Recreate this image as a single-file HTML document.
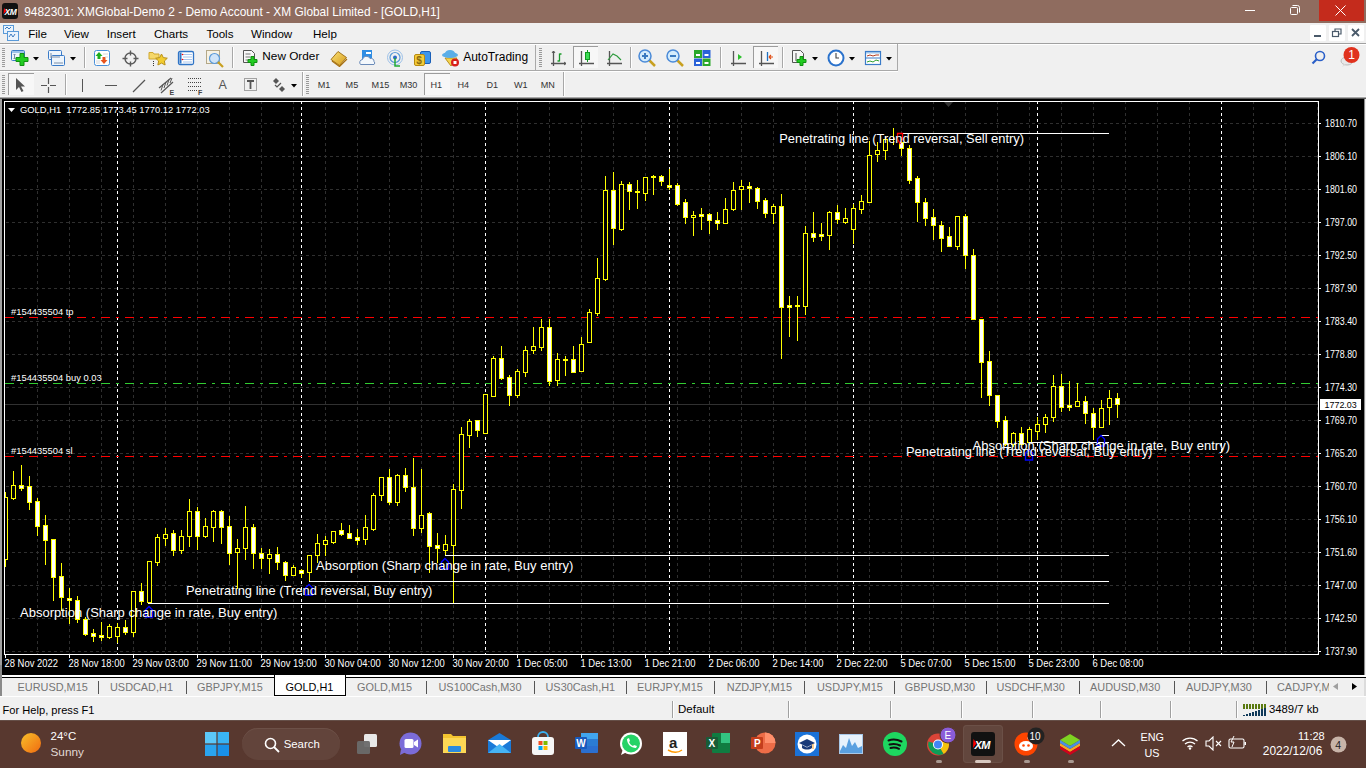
<!DOCTYPE html>
<html><head><meta charset="utf-8"><title>MT4</title>
<style>
html,body{margin:0;padding:0;}
body{width:1366px;height:768px;overflow:hidden;position:relative;background:#f0f0f0;font-family:"Liberation Sans", sans-serif;}
.a{position:absolute;}
.t{white-space:nowrap;line-height:1;}
#title{left:0;top:0;width:1366px;height:23px;background:#8f6c5f;}
#menu{left:0;top:23px;width:1366px;height:20px;background:#f0f0f0;}
#chartwin{left:0;top:97px;width:1366px;height:578px;background:#a0a0a0;}
#taskbar{left:0;top:720px;width:1366px;height:48px;background:#58382f;}
</style></head><body>
<div id="title" class="a">
  <div class="a" style="left:2px;top:3px;width:16px;height:16px;background:#111;border-radius:3px;"></div>
  <div class="a t" style="left:4.5px;top:7.5px;font-size:8.5px;font-weight:bold;font-style:italic;color:#fff;letter-spacing:-0.5px">XM</div><svg class="a" style="left:3px;top:8px" width="4" height="6" viewBox="0 0 4 6"><path d="M1 0L3.5 3L0.5 6Z" fill="#f00"/></svg>
  <div class="a t" style="left:24.2px;top:7.2px;font-size:11.9px;color:#fff;">9482301: XMGlobal-Demo 2 - Demo Account - XM Global Limited - [GOLD,H1]</div>
  <div class="a" style="left:1245px;top:10px;width:10px;height:1px;background:#fff"></div>
  <svg class="a" style="left:1289px;top:4px" width="12" height="12" viewBox="0 0 12 12"><rect x="1.5" y="3.5" width="7" height="7" rx="1" fill="none" stroke="#fff"/><path d="M3.5 1.5h5a2 2 0 0 1 2 2v5" fill="none" stroke="#fff"/></svg>
  <div class="a" style="left:1319px;top:0;width:45px;height:21px;background:#c42b1c"></div>
  <svg class="a" style="left:1335px;top:5px" width="11" height="11" viewBox="0 0 11 11"><path d="M0.5 0.5l10 10M10.5 0.5l-10 10" stroke="#fff" stroke-width="1"/></svg>
</div>
<div id="menu" class="a"></div>
<div class="a" style="left:0;top:43px;width:1366px;height:1px;background:#a0a0a0"></div><div class="a" style="left:0;top:44px;width:1366px;height:1px;background:#fff"></div>
<svg class="a" style="left:3px;top:25px;" width="16" height="16" viewBox="0 0 16 16"><rect x="0.5" y="0.5" width="10" height="8" fill="#eaf3fc" stroke="#5a9ad8"/><rect x="4.5" y="6.5" width="11" height="9" fill="#eaf3fc" stroke="#5a9ad8"/><path d="M2 4l2-2 2 2 2-2M6 12l2-3 2 3 2-3" stroke="#3a7ac0" fill="none"/></svg><div class="a t" style="left:28.2px;top:27.78px;font-size:11.6px;color:#000;">File</div><div class="a t" style="left:64px;top:27.78px;font-size:11.6px;color:#000;">View</div><div class="a t" style="left:106.7px;top:27.78px;font-size:11.6px;color:#000;">Insert</div><div class="a t" style="left:154px;top:27.78px;font-size:11.6px;color:#000;">Charts</div><div class="a t" style="left:206.4px;top:27.78px;font-size:11.6px;color:#000;">Tools</div><div class="a t" style="left:251px;top:27.78px;font-size:11.6px;color:#000;">Window</div><div class="a t" style="left:313px;top:27.78px;font-size:11.6px;color:#000;">Help</div><div class="a" style="left:1310px;top:25px;width:16px;height:16px;background:#fff;border-radius:1px;"></div><svg class="a" style="left:1310px;top:25px;" width="16" height="16" viewBox="0 0 16 16"><rect x="4" y="10" width="7" height="2" fill="#4a5a6a"/></svg><div class="a" style="left:1329px;top:25px;width:16px;height:16px;background:#fff;border-radius:1px;"></div><svg class="a" style="left:1329px;top:25px;" width="16" height="16" viewBox="0 0 16 16"><rect x="3.5" y="6.5" width="6" height="5" fill="none" stroke="#4a5a6a" stroke-width="1.2"/><path d="M6 6V4h6v5h-2" fill="none" stroke="#4a5a6a" stroke-width="1.2"/></svg><div class="a" style="left:1348px;top:25px;width:16px;height:16px;background:#fff;border-radius:1px;"></div><svg class="a" style="left:1348px;top:25px;" width="16" height="16" viewBox="0 0 16 16"><path d="M4 4l7 7M11 4l-7 7" stroke="#4a5a6a" stroke-width="1.8"/></svg>
<div class="a" style="left:0;top:44px;width:898px;height:1px;background:#fff"></div><div class="a" style="left:0;top:70px;width:898px;height:1px;background:#a9a9a9"></div><div class="a" style="left:0;top:71px;width:898px;height:1px;background:#fff"></div><div class="a" style="left:897px;top:44px;width:1px;height:27px;background:#a9a9a9"></div><div class="a" style="left:535px;top:45px;width:1px;height:25px;background:#a9a9a9"></div><div class="a" style="left:565px;top:72px;width:801px;height:0px;"></div><svg class="a" style="left:2px;top:48px;" width="3" height="20" viewBox="0 0 3 20"><rect x="0" y="0" width="3" height="1" fill="#9a9a9a"/><rect x="0" y="2" width="3" height="1" fill="#9a9a9a"/><rect x="0" y="4" width="3" height="1" fill="#9a9a9a"/><rect x="0" y="6" width="3" height="1" fill="#9a9a9a"/><rect x="0" y="8" width="3" height="1" fill="#9a9a9a"/><rect x="0" y="10" width="3" height="1" fill="#9a9a9a"/><rect x="0" y="12" width="3" height="1" fill="#9a9a9a"/><rect x="0" y="14" width="3" height="1" fill="#9a9a9a"/><rect x="0" y="16" width="3" height="1" fill="#9a9a9a"/><rect x="0" y="18" width="3" height="1" fill="#9a9a9a"/></svg><svg class="a" style="left:539px;top:48px;" width="3" height="20" viewBox="0 0 3 20"><rect x="0" y="0" width="3" height="1" fill="#9a9a9a"/><rect x="0" y="2" width="3" height="1" fill="#9a9a9a"/><rect x="0" y="4" width="3" height="1" fill="#9a9a9a"/><rect x="0" y="6" width="3" height="1" fill="#9a9a9a"/><rect x="0" y="8" width="3" height="1" fill="#9a9a9a"/><rect x="0" y="10" width="3" height="1" fill="#9a9a9a"/><rect x="0" y="12" width="3" height="1" fill="#9a9a9a"/><rect x="0" y="14" width="3" height="1" fill="#9a9a9a"/><rect x="0" y="16" width="3" height="1" fill="#9a9a9a"/><rect x="0" y="18" width="3" height="1" fill="#9a9a9a"/></svg><svg class="a" style="left:2px;top:75px;" width="3" height="20" viewBox="0 0 3 20"><rect x="0" y="0" width="3" height="1" fill="#9a9a9a"/><rect x="0" y="2" width="3" height="1" fill="#9a9a9a"/><rect x="0" y="4" width="3" height="1" fill="#9a9a9a"/><rect x="0" y="6" width="3" height="1" fill="#9a9a9a"/><rect x="0" y="8" width="3" height="1" fill="#9a9a9a"/><rect x="0" y="10" width="3" height="1" fill="#9a9a9a"/><rect x="0" y="12" width="3" height="1" fill="#9a9a9a"/><rect x="0" y="14" width="3" height="1" fill="#9a9a9a"/><rect x="0" y="16" width="3" height="1" fill="#9a9a9a"/><rect x="0" y="18" width="3" height="1" fill="#9a9a9a"/></svg><svg class="a" style="left:306px;top:75px;" width="3" height="20" viewBox="0 0 3 20"><rect x="0" y="0" width="3" height="1" fill="#9a9a9a"/><rect x="0" y="2" width="3" height="1" fill="#9a9a9a"/><rect x="0" y="4" width="3" height="1" fill="#9a9a9a"/><rect x="0" y="6" width="3" height="1" fill="#9a9a9a"/><rect x="0" y="8" width="3" height="1" fill="#9a9a9a"/><rect x="0" y="10" width="3" height="1" fill="#9a9a9a"/><rect x="0" y="12" width="3" height="1" fill="#9a9a9a"/><rect x="0" y="14" width="3" height="1" fill="#9a9a9a"/><rect x="0" y="16" width="3" height="1" fill="#9a9a9a"/><rect x="0" y="18" width="3" height="1" fill="#9a9a9a"/></svg><svg class="a" style="left:10px;top:49px;" width="20" height="18" viewBox="0 0 20 18"><rect x="1.5" y="1.5" width="13" height="10" rx="1" fill="#eef5fc" stroke="#3a7bc8"/><rect x="2" y="2" width="12" height="2" fill="#9cc3ea"/><path d="M4.5 5v5M3.5 6l1-1 1 1M3.5 9l1 1 1-1" stroke="#7a8ea8" fill="none"/><path d="M10 4.5h4v4h4v4h-4v4h-4v-4h-4v-4h4z" fill="#22cc22" stroke="#109010"/></svg><svg class="a" style="left:33px;top:57px;" width="6" height="4" viewBox="0 0 6 4"><path d="M0 0H6L3 3.5Z" fill="#000"/></svg><svg class="a" style="left:47px;top:49px;" width="20" height="18" viewBox="0 0 20 18"><rect x="1.5" y="1.5" width="13" height="9" rx="1" fill="#eef5fc" stroke="#3a7bc8"/><rect x="4.5" y="6.5" width="13" height="10" rx="1" fill="#eef5fc" stroke="#3a7bc8"/><path d="M4 4v5M4 8h9M7 14h9" stroke="#7a8ea8" fill="none"/></svg><svg class="a" style="left:70px;top:57px;" width="6" height="4" viewBox="0 0 6 4"><path d="M0 0H6L3 3.5Z" fill="#000"/></svg><div class="a" style="left:84px;top:47px;width:1px;height:21px;background:#a8a8a8;box-shadow:1px 0 0 #fff;"></div><svg class="a" style="left:93px;top:49px;" width="18" height="18" viewBox="0 0 18 18"><rect x="1.5" y="1.5" width="15" height="15" rx="2" fill="#fff" stroke="#4a90d9"/><path d="M6 3L2.5 7H4.5V10H7.5V7H9.5Z" fill="#1fae1f"/><path d="M11 15L14.5 11H12.5V8H9.5V11H7.5Z" fill="#e8541e"/><path d="M10 5h5M12 8h3M3 12h4M3 14h4" stroke="#d8d8d8"/></svg><svg class="a" style="left:122px;top:50px;" width="17" height="17" viewBox="0 0 17 17"><circle cx="8.5" cy="8.5" r="5.5" fill="none" stroke="#5a5a5a" stroke-width="1.4"/><path d="M8.5 0.5v5M8.5 11.5v5M0.5 8.5h5M11.5 8.5h5" stroke="#5a5a5a" stroke-width="1.4"/></svg><svg class="a" style="left:148px;top:49px;" width="20" height="18" viewBox="0 0 20 18"><path d="M1 3.5h4l1 1.5h5v5H1z" fill="#f6d86a" stroke="#d0a830"/><path d="M13.5 5l1.8 3.6 4 .6-2.9 2.8.7 4-3.6-1.9-3.6 1.9.7-4-2.9-2.8 4-.6z" fill="#f2cc30" stroke="#b8901a"/><path d="M5.5 12v5" stroke="#333" stroke-dasharray="1 1"/></svg><svg class="a" style="left:177px;top:50px;" width="18" height="16" viewBox="0 0 18 16"><rect x="1.5" y="1.5" width="15" height="13" rx="1.5" fill="#fff" stroke="#2f74c6" stroke-width="1.3"/><rect x="2.5" y="2.5" width="2" height="11" fill="#2f74c6"/><path d="M6 4.5h9M6 7h9M6 9.5h9M6 12h9" stroke="#a9c6ee"/><circle cx="5.5" cy="4.5" r=".8" fill="red"/><circle cx="5.5" cy="9.5" r=".8" fill="red"/></svg><svg class="a" style="left:205px;top:49px;" width="20" height="19" viewBox="0 0 20 19"><rect x="1.5" y="1.5" width="13" height="13" fill="#f7f2e4" stroke="#b4a888"/><circle cx="9.5" cy="9.5" r="5" fill="#cfe4f8" stroke="#5b9ad8" stroke-width="1.2"/><path d="M13 13l5 5" stroke="#c8a020" stroke-width="2.2"/></svg><div class="a" style="left:232px;top:47px;width:1px;height:21px;background:#a8a8a8;box-shadow:1px 0 0 #fff;"></div><svg class="a" style="left:242px;top:49px;" width="18" height="19" viewBox="0 0 18 19"><path d="M1.5 1.5h8l3 3v9h-11z" fill="#f8f8f8" stroke="#555"/><path d="M3.5 5h5M3.5 8h5M3.5 11h5" stroke="#777"/><path d="M9 7.5h3v3h3v3h-3v3h-3v-3h-3v-3h3z" fill="#22cc22" stroke="#109010"/></svg><div class="a t" style="left:262.3px;top:51.01px;font-size:11.8px;color:#000;">New Order</div><svg class="a" style="left:330px;top:50px;" width="18" height="17" viewBox="0 0 18 17"><defs><linearGradient id="gld" x1="0" y1="0" x2="1" y2="1"><stop offset="0" stop-color="#fbe27a"/><stop offset="1" stop-color="#d49a18"/></linearGradient></defs><path d="M1 9.5L8 1.5L16.5 7.5L9.5 15.5Z" fill="url(#gld)" stroke="#9a6a10" stroke-width=".9"/><path d="M2 11l7.5 5.5 7.5-7.5" stroke="#a87010" stroke-width="1.2" fill="none"/></svg><svg class="a" style="left:358px;top:49px;" width="18" height="18" viewBox="0 0 18 18"><rect x="4" y="1" width="10" height="10" fill="#2f8de4"/><rect x="8" y="3" width="5" height="2" fill="#fff"/><path d="M2.5 15.5a3 3 0 0 1 2-5a4 4 0 0 1 7.5-1a3 3 0 0 1 4 3a2 2 0 0 1 0 3z" fill="#f4f8fc" stroke="#6a8ab8"/></svg><svg class="a" style="left:386px;top:49px;" width="18" height="18" viewBox="0 0 18 18"><circle cx="9" cy="8.5" r="7.5" fill="none" stroke="#9cc0e8" stroke-width="1"/><circle cx="9" cy="8.5" r="5" fill="none" stroke="#5a9ad8" stroke-width="1.2"/><circle cx="9" cy="8.5" r="2" fill="#2a6ac8"/><path d="M9 9v8h5" stroke="#22aa33" stroke-width="1.5" fill="none"/></svg><svg class="a" style="left:413px;top:49px;" width="19" height="18" viewBox="0 0 19 18"><rect x="7.5" y="2.5" width="10" height="12" rx="1.5" fill="#3d96ea" stroke="#1a5fb8"/><rect x="1.5" y="5.5" width="10" height="11" rx="1.5" fill="#f2cc3a" stroke="#b88a10"/><text x="3.3" y="14.5" font-family="Liberation Sans" font-size="10" font-weight="bold" fill="#8a6a10">$</text></svg><svg class="a" style="left:441px;top:49px;" width="19" height="18" viewBox="0 0 19 18"><path d="M4 9l6 8 6-8z" fill="#f4d450" stroke="#b89020"/><ellipse cx="9" cy="6" rx="8" ry="3" fill="#5aaee8"/><ellipse cx="9" cy="4.5" rx="5" ry="3.5" fill="#5aaee8"/><circle cx="14" cy="13.5" r="4" fill="#d8201a"/><rect x="12.5" y="12" width="3" height="3" fill="#fff"/></svg><div class="a t" style="left:463.2px;top:50.84px;font-size:12px;color:#000;">AutoTrading</div><svg class="a" style="left:550px;top:50px;" width="17" height="17" viewBox="0 0 17 17"><path d="M3.5 1v15M1 13.5h15" stroke="#555" stroke-width="1.3"/><path d="M2 3l1.5-2 1.5 2M14 12l2 1.5-2 1.5" stroke="#555" fill="none"/><path d="M9.5 11.5v-8M7.5 11h2M9.5 4h2" stroke="#1a9a2a" stroke-width="1.3"/></svg><div class="a" style="left:573px;top:46px;width:25px;height:22px;background:#f7f7f7;border-left:1px solid #9c9c9c;border-top:1px solid #9c9c9c;box-sizing:border-box;"></div><svg class="a" style="left:578px;top:50px;" width="17" height="17" viewBox="0 0 17 17"><path d="M3.5 1v15M1 13.5h15" stroke="#555" stroke-width="1.3"/><path d="M9.5 0v12" stroke="#109a20"/><rect x="7.5" y="2.5" width="4" height="7" fill="#3ddc55" stroke="#109a20"/></svg><svg class="a" style="left:606px;top:50px;" width="17" height="17" viewBox="0 0 17 17"><path d="M3.5 1v15M1 13.5h15" stroke="#555" stroke-width="1.3"/><path d="M2 10l5-6 4 2 4 4" stroke="#2a9a3a" fill="none" stroke-width="1.1"/></svg><div class="a" style="left:630px;top:47px;width:1px;height:21px;background:#a8a8a8;box-shadow:1px 0 0 #fff;"></div><svg class="a" style="left:637px;top:48px;" width="20" height="20" viewBox="0 0 20 20"><path d="M11 11l7 7" stroke="#c8a020" stroke-width="2.5"/><circle cx="8" cy="8" r="6" fill="#d4ecfc" stroke="#4a8ad8" stroke-width="1.5"/><path d="M5 8h6M8 5v6" stroke="#3a7ac0" stroke-width="2"/></svg><svg class="a" style="left:665px;top:48px;" width="20" height="20" viewBox="0 0 20 20"><path d="M11 11l7 7" stroke="#c8a020" stroke-width="2.5"/><circle cx="8" cy="8" r="6" fill="#d4ecfc" stroke="#4a8ad8" stroke-width="1.5"/><path d="M5 8h6" stroke="#3a7ac0" stroke-width="2"/></svg><svg class="a" style="left:694px;top:50px;" width="17" height="16" viewBox="0 0 17 16"><rect x="0" y="0" width="8" height="8" fill="#2aa82a"/><rect x="8.5" y="0" width="8" height="8" fill="#2a62d8"/><rect x="0" y="8.5" width="8" height="8" fill="#2a62d8"/><rect x="8.5" y="8.5" width="8" height="8" fill="#2aa82a"/><path d="M2 4h4v2h-4zM10.5 4h4v2h-4zM2 12h4v2h-4zM10.5 12h4v2h-4z" fill="#fff"/></svg><div class="a" style="left:720px;top:47px;width:1px;height:21px;background:#a8a8a8;box-shadow:1px 0 0 #fff;"></div><svg class="a" style="left:730px;top:50px;" width="17" height="17" viewBox="0 0 17 17"><path d="M3.5 1v15M1 13.5h15" stroke="#555" stroke-width="1.3"/><path d="M8 4l4 3-4 3z" fill="#2cc02c"/></svg><div class="a" style="left:753px;top:46px;width:25px;height:22px;background:#f7f7f7;border-left:1px solid #9c9c9c;border-top:1px solid #9c9c9c;box-sizing:border-box;"></div><svg class="a" style="left:758px;top:50px;" width="17" height="17" viewBox="0 0 17 17"><path d="M3.5 1v15M1 13.5h15" stroke="#555" stroke-width="1.3"/><path d="M9.5 2v9" stroke="#2070c0" stroke-width="1.3"/><path d="M11 7h4M11 7l2-2M11 7l2 2" stroke="#e04a10" stroke-width="1.2"/></svg><div class="a" style="left:782px;top:47px;width:1px;height:21px;background:#a8a8a8;box-shadow:1px 0 0 #fff;"></div><svg class="a" style="left:791px;top:49px;" width="18" height="19" viewBox="0 0 18 19"><path d="M1.5 1.5h8l3 3v9h-11z" fill="#f8f8f8" stroke="#555"/><path d="M5 4v8" stroke="#555"/><path d="M9 7.5h3v3h3v3h-3v3h-3v-3h-3v-3h3z" fill="#22cc22" stroke="#109010"/></svg><svg class="a" style="left:812px;top:57px;" width="6" height="4" viewBox="0 0 6 4"><path d="M0 0H6L3 3.5Z" fill="#000"/></svg><svg class="a" style="left:827px;top:49px;" width="18" height="18" viewBox="0 0 18 18"><circle cx="9" cy="9" r="7.5" fill="#fff" stroke="#2a72cc" stroke-width="2"/><path d="M9 4v5h3" stroke="#444" fill="none" stroke-width="1.1"/></svg><svg class="a" style="left:849px;top:57px;" width="6" height="4" viewBox="0 0 6 4"><path d="M0 0H6L3 3.5Z" fill="#000"/></svg><svg class="a" style="left:864px;top:50px;" width="18" height="16" viewBox="0 0 18 16"><rect x="1.5" y="1.5" width="15" height="13" fill="#fff" stroke="#3a7bc8" stroke-width="1.2"/><rect x="2" y="2" width="14" height="1.5" fill="#9cc3ea"/><path d="M2 8h14" stroke="#3a7bc8"/><path d="M3 6l3-1 3 1 3-1 3 0" stroke="#b03a20" fill="none"/><path d="M3 12l3-1 3 1 3-2 3 1" stroke="#30a030" fill="none"/></svg><svg class="a" style="left:886px;top:57px;" width="6" height="4" viewBox="0 0 6 4"><path d="M0 0H6L3 3.5Z" fill="#000"/></svg><svg class="a" style="left:1311px;top:50px;" width="15" height="15" viewBox="0 0 15 15"><circle cx="9" cy="6" r="4.5" fill="none" stroke="#2a5fc8" stroke-width="1.6"/><path d="M6 9l-4.5 4.5" stroke="#2a5fc8" stroke-width="2.2"/></svg><svg class="a" style="left:1336px;top:46px;" width="30" height="22" viewBox="0 0 30 22"><ellipse cx="11" cy="15" rx="6" ry="4" fill="#e8e8e8" stroke="#bbb"/><path d="M8 18l-2 3 4-2" fill="#ddd"/><circle cx="15.5" cy="9" r="8" fill="#e0321e"/><text x="12.3" y="13.3" font-family="Liberation Sans" font-size="12" fill="#fff">1</text></svg><div class="a" style="left:8px;top:73px;width:26px;height:22px;background:#f7f7f7;border-left:1px solid #9c9c9c;border-top:1px solid #9c9c9c;box-sizing:border-box;"></div><svg class="a" style="left:15px;top:77px;" width="10" height="16" viewBox="0 0 10 16"><path d="M1 1V13L4 10L6.5 15L8.5 14L6 9.5H10Z" fill="#555"/></svg><svg class="a" style="left:40px;top:77px;" width="17" height="17" viewBox="0 0 17 17"><path d="M8.5 1v6M8.5 10v6M1 8.5h6M10 8.5h6" stroke="#555" stroke-width="1.2"/></svg><div class="a" style="left:65px;top:74px;width:1px;height:21px;background:#a8a8a8;box-shadow:1px 0 0 #fff;"></div><div class="a" style="left:82px;top:79px;width:1px;height:13px;background:#555"></div><div class="a" style="left:105px;top:85px;width:12px;height:1px;background:#555"></div><svg class="a" style="left:132px;top:79px;" width="14" height="14" viewBox="0 0 14 14"><path d="M1 13L13 1" stroke="#555" stroke-width="1.2"/></svg><svg class="a" style="left:158px;top:77px;" width="17" height="18" viewBox="0 0 17 18"><path d="M1 11L13 1M3 16L15 5" stroke="#555" stroke-width="1.2" fill="none"/><path d="M3 13.5l2-6M6 11l2-6M9 8.5l2-6M12 6l2-5" stroke="#555" stroke-width="1" fill="none"/><text x="11.5" y="17.5" font-family="Liberation Sans" font-size="7" font-weight="bold" fill="#444">E</text></svg><svg class="a" style="left:187px;top:77px;" width="17" height="18" viewBox="0 0 17 18"><path d="M1 1.5h13M1 5.5h13M1 9.5h13M1 13.5h9" stroke="#444" stroke-dasharray="1 1"/><text x="11" y="17.5" font-family="Liberation Sans" font-size="7" font-weight="bold" fill="#444">F</text></svg><div class="a t" style="left:218.5px;top:79.42px;font-size:12.5px;color:#555;">A</div><svg class="a" style="left:243px;top:77px;" width="15" height="15" viewBox="0 0 15 15"><rect x="1.5" y="1.5" width="12" height="12" fill="none" stroke="#555" stroke-dasharray="1 1"/><path d="M4 4h7M7.5 4v8" stroke="#555" stroke-width="1.8"/></svg><svg class="a" style="left:271px;top:78px;" width="16" height="15" viewBox="0 0 16 15"><path d="M5 0l3 3-3 3-3-3z" fill="#555"/><path d="M11 8l3 3-3 3-3-3z" fill="#555"/><path d="M4 7l2 2 4-4" stroke="#555" fill="none" stroke-width="1.2"/></svg><svg class="a" style="left:291px;top:84px;" width="6" height="4" viewBox="0 0 6 4"><path d="M0 0H6L3 3.5Z" fill="#000"/></svg><div class="a" style="left:302px;top:72px;width:1px;height:25px;background:#a8a8a8;box-shadow:1px 0 0 #fff;"></div><div class="a t" style="left:317.7px;top:81.0px;font-size:9.1px;color:#333;">M1</div><div class="a t" style="left:345.6px;top:81.0px;font-size:9.1px;color:#333;">M5</div><div class="a t" style="left:371.6px;top:81.0px;font-size:9.1px;color:#333;">M15</div><div class="a t" style="left:399.7px;top:81.0px;font-size:9.1px;color:#333;">M30</div><div class="a" style="left:424px;top:73px;width:26px;height:22px;background:#f7f7f7;border-left:1px solid #9c9c9c;border-top:1px solid #9c9c9c;box-sizing:border-box;"></div><div class="a t" style="left:430.5px;top:81.0px;font-size:9.1px;color:#333;">H1</div><div class="a t" style="left:457.5px;top:81.0px;font-size:9.1px;color:#333;">H4</div><div class="a t" style="left:486.5px;top:81.0px;font-size:9.1px;color:#333;">D1</div><div class="a t" style="left:514px;top:81.0px;font-size:9.1px;color:#333;">W1</div><div class="a t" style="left:540.7px;top:81.0px;font-size:9.1px;color:#333;">MN</div><div class="a" style="left:563px;top:72px;width:1px;height:25px;background:#a8a8a8;box-shadow:1px 0 0 #fff;"></div>
<div id="chartwin" class="a"></div><div class="a" style="left:1365px;top:97px;width:1px;height:578px;background:#f0f0f0"></div><div class="a" style="left:1364px;top:97px;width:1px;height:578px;background:#8c8c8c"></div>
<div class="a" style="left:0;top:96px;width:1366px;height:1px;background:#f6f6f6"></div><div class="a" style="left:0;top:97px;width:1366px;height:1px;background:#a8a8a8"></div><div class="a" style="left:0;top:98px;width:1366px;height:1px;background:#5a5a5a"></div>
<svg id="chart" width="1366" height="578" viewBox="0 97 1366 578" style="position:absolute;left:0;top:97px"><rect x="2" y="99" width="1362" height="576" fill="#000"/><g stroke="#2f2f2f" stroke-width="1" stroke-dasharray="3 3" shape-rendering="crispEdges"><line x1="6" y1="123.5" x2="1318" y2="123.5"/><line x1="6" y1="156.5" x2="1318" y2="156.5"/><line x1="6" y1="189.5" x2="1318" y2="189.5"/><line x1="6" y1="222.5" x2="1318" y2="222.5"/><line x1="6" y1="255.5" x2="1318" y2="255.5"/><line x1="6" y1="288.5" x2="1318" y2="288.5"/><line x1="6" y1="321.5" x2="1318" y2="321.5"/><line x1="6" y1="354.5" x2="1318" y2="354.5"/><line x1="6" y1="387.5" x2="1318" y2="387.5"/><line x1="6" y1="420.5" x2="1318" y2="420.5"/><line x1="6" y1="453.5" x2="1318" y2="453.5"/><line x1="6" y1="486.5" x2="1318" y2="486.5"/><line x1="6" y1="519.5" x2="1318" y2="519.5"/><line x1="6" y1="552.5" x2="1318" y2="552.5"/><line x1="6" y1="585.5" x2="1318" y2="585.5"/><line x1="6" y1="618.5" x2="1318" y2="618.5"/><line x1="6" y1="651.5" x2="1318" y2="651.5"/><line x1="37.5" y1="101" x2="37.5" y2="654"/><line x1="69.5" y1="101" x2="69.5" y2="654"/><line x1="101.5" y1="101" x2="101.5" y2="654"/><line x1="133.5" y1="101" x2="133.5" y2="654"/><line x1="165.5" y1="101" x2="165.5" y2="654"/><line x1="197.5" y1="101" x2="197.5" y2="654"/><line x1="229.5" y1="101" x2="229.5" y2="654"/><line x1="261.5" y1="101" x2="261.5" y2="654"/><line x1="293.5" y1="101" x2="293.5" y2="654"/><line x1="325.5" y1="101" x2="325.5" y2="654"/><line x1="357.5" y1="101" x2="357.5" y2="654"/><line x1="389.5" y1="101" x2="389.5" y2="654"/><line x1="421.5" y1="101" x2="421.5" y2="654"/><line x1="453.5" y1="101" x2="453.5" y2="654"/><line x1="485.5" y1="101" x2="485.5" y2="654"/><line x1="517.5" y1="101" x2="517.5" y2="654"/><line x1="549.5" y1="101" x2="549.5" y2="654"/><line x1="581.5" y1="101" x2="581.5" y2="654"/><line x1="613.5" y1="101" x2="613.5" y2="654"/><line x1="645.5" y1="101" x2="645.5" y2="654"/><line x1="677.5" y1="101" x2="677.5" y2="654"/><line x1="709.5" y1="101" x2="709.5" y2="654"/><line x1="741.5" y1="101" x2="741.5" y2="654"/><line x1="773.5" y1="101" x2="773.5" y2="654"/><line x1="805.5" y1="101" x2="805.5" y2="654"/><line x1="837.5" y1="101" x2="837.5" y2="654"/><line x1="869.5" y1="101" x2="869.5" y2="654"/><line x1="901.5" y1="101" x2="901.5" y2="654"/><line x1="933.5" y1="101" x2="933.5" y2="654"/><line x1="965.5" y1="101" x2="965.5" y2="654"/><line x1="997.5" y1="101" x2="997.5" y2="654"/><line x1="1029.5" y1="101" x2="1029.5" y2="654"/><line x1="1061.5" y1="101" x2="1061.5" y2="654"/><line x1="1093.5" y1="101" x2="1093.5" y2="654"/><line x1="1125.5" y1="101" x2="1125.5" y2="654"/><line x1="1157.5" y1="101" x2="1157.5" y2="654"/><line x1="1189.5" y1="101" x2="1189.5" y2="654"/><line x1="1221.5" y1="101" x2="1221.5" y2="654"/><line x1="1253.5" y1="101" x2="1253.5" y2="654"/><line x1="1285.5" y1="101" x2="1285.5" y2="654"/><line x1="1317.5" y1="101" x2="1317.5" y2="654"/></g><g stroke="#fff" stroke-width="1" stroke-dasharray="3 3" shape-rendering="crispEdges"><line x1="117.5" y1="101" x2="117.5" y2="654"/><line x1="301.5" y1="101" x2="301.5" y2="654"/><line x1="485.5" y1="101" x2="485.5" y2="654"/><line x1="669.5" y1="101" x2="669.5" y2="654"/><line x1="853.5" y1="101" x2="853.5" y2="654"/><line x1="1037.5" y1="101" x2="1037.5" y2="654"/><line x1="1221.5" y1="101" x2="1221.5" y2="654"/></g><line x1="5" y1="404.5" x2="1318" y2="404.5" stroke="#313131" shape-rendering="crispEdges"/><line x1="5" y1="317.5" x2="1318" y2="317.5" stroke="#ff0000" stroke-dasharray="9 6 3 6" shape-rendering="crispEdges"/><line x1="5" y1="383.5" x2="1318" y2="383.5" stroke="#32cd32" stroke-dasharray="9 6 3 6" shape-rendering="crispEdges"/><line x1="5" y1="456.5" x2="1318" y2="456.5" stroke="#ff0000" stroke-dasharray="9 6 3 6" shape-rendering="crispEdges"/><clipPath id="pc"><rect x="5" y="102" width="1313" height="552"/></clipPath><g clip-path="url(#pc)" shape-rendering="crispEdges"><path d="M5.5 492V567M13.5 471V500M21.5 465V491M29.5 476V510M37.5 498V536M45.5 515V565M53.5 539V601M61.5 563V611M69.5 588V624M77.5 596V623M85.5 617V636M93.5 629V642M101.5 622V641M109.5 624V639M117.5 623V643M125.5 620V635M133.5 591V637M141.5 583V605M149.5 561V604M157.5 534V566M165.5 528V546M173.5 530V556M181.5 530V554M189.5 499V547M197.5 507V550M205.5 518V538M213.5 510V542M221.5 510V544M229.5 516V565M237.5 539V589M245.5 506V560M253.5 524V569M261.5 548V569M269.5 549V574M277.5 547V570M285.5 561V581M293.5 565V576M301.5 569V578M309.5 555V582M317.5 534V563M325.5 536V556M333.5 531V544M341.5 523V536M349.5 525V539M357.5 529V545M365.5 515V545M373.5 493V531M381.5 477V501M389.5 469V505M397.5 474V506M405.5 468V492M413.5 458V536M421.5 469V533M429.5 512V573M437.5 533V563M445.5 535V555M453.5 484V604M461.5 427V509M469.5 419V448M477.5 420V437M485.5 394V434M493.5 356V397M501.5 346V380M509.5 375V406M517.5 369V398M525.5 346V377M533.5 327V354M541.5 319V351M549.5 319V386M557.5 353V386M565.5 356V376M573.5 346V373M581.5 337V372M589.5 309V343M597.5 258V316M605.5 176V281M613.5 172V245M621.5 181V231M629.5 182V210M637.5 180V209M645.5 177V201M653.5 175V195M661.5 175V186M669.5 169V190M677.5 183V206M685.5 199V224M693.5 211V236M701.5 208V230M709.5 213V234M717.5 212V230M725.5 198V224M733.5 182V211M741.5 180V210M749.5 182V203M757.5 187V209M765.5 198V218M773.5 204V224M781.5 194V359M789.5 296V337M797.5 296V341M805.5 226V315M813.5 212V242M821.5 223V241M829.5 211V250M837.5 205V224M845.5 208V224M853.5 204V244M861.5 195V214M869.5 141V203M877.5 142V162M885.5 136V160M893.5 128V145M901.5 139V156M909.5 145V184M917.5 176V222M925.5 198V226M933.5 209V240M941.5 221V252M949.5 227V247M957.5 216V250M965.5 214V269M973.5 249V320M981.5 319V398M989.5 351V406M997.5 395V428M1005.5 416V446M1013.5 432V447M1021.5 427V445M1029.5 427V445M1037.5 417V440M1045.5 414V433M1053.5 375V422M1061.5 374V412M1069.5 381V411M1077.5 383V407M1085.5 396V424M1093.5 408V440M1101.5 400V428M1109.5 390V425M1117.5 393V418" stroke="#ffff00" stroke-width="1" fill="none"/><g stroke="#ffff00" stroke-width="1"><rect x="3.5" y="497.5" width="4" height="62" fill="#000"/><rect x="11.5" y="485.5" width="4" height="13" fill="#000"/><rect x="19.5" y="485.5" width="4" height="3" fill="#fff"/><rect x="27.5" y="486.5" width="4" height="16" fill="#fff"/><rect x="35.5" y="501.5" width="4" height="25" fill="#fff"/><rect x="43.5" y="525.5" width="4" height="15" fill="#fff"/><rect x="51.5" y="539.5" width="4" height="38" fill="#fff"/><rect x="59.5" y="576.5" width="4" height="21" fill="#fff"/><rect x="67.5" y="598.5" width="4" height="2" fill="#fff"/><rect x="75.5" y="600.5" width="4" height="19" fill="#fff"/><rect x="83.5" y="619.5" width="4" height="15" fill="#fff"/><rect x="91.5" y="633.5" width="4" height="3" fill="#fff"/><rect x="99.5" y="635.5" width="4" height="2" fill="#fff"/><rect x="107.5" y="626.5" width="4" height="11" fill="#000"/><rect x="115.5" y="627.5" width="4" height="9" fill="#000"/><rect x="123.5" y="627.5" width="4" height="5" fill="#fff"/><rect x="131.5" y="591.5" width="4" height="41" fill="#000"/><rect x="139.5" y="591.5" width="4" height="10" fill="#fff"/><rect x="147.5" y="561.5" width="4" height="41" fill="#000"/><rect x="155.5" y="537.5" width="4" height="25" fill="#000"/><rect x="163.5" y="534.5" width="4" height="4" fill="#000"/><rect x="171.5" y="533.5" width="4" height="17" fill="#fff"/><rect x="179.5" y="536.5" width="4" height="14" fill="#000"/><rect x="187.5" y="511.5" width="4" height="25" fill="#000"/><rect x="195.5" y="511.5" width="4" height="25" fill="#fff"/><rect x="203.5" y="526.5" width="4" height="10" fill="#000"/><rect x="211.5" y="511.5" width="4" height="16" fill="#000"/><rect x="219.5" y="511.5" width="4" height="16" fill="#fff"/><rect x="227.5" y="526.5" width="4" height="27" fill="#fff"/><rect x="235.5" y="548.5" width="4" height="4" fill="#000"/><rect x="243.5" y="527.5" width="4" height="21" fill="#000"/><rect x="251.5" y="527.5" width="4" height="26" fill="#fff"/><rect x="259.5" y="553.5" width="4" height="5" fill="#fff"/><rect x="267.5" y="554.5" width="4" height="4" fill="#000"/><rect x="275.5" y="554.5" width="4" height="8" fill="#fff"/><rect x="283.5" y="562.5" width="4" height="13" fill="#fff"/><rect x="291.5" y="567.5" width="4" height="8" fill="#000"/><rect x="299.5" y="570.5" width="4" height="3" fill="#fff"/><rect x="307.5" y="555.5" width="4" height="17" fill="#000"/><rect x="315.5" y="543.5" width="4" height="12" fill="#000"/><rect x="323.5" y="540.5" width="4" height="4" fill="#000"/><rect x="331.5" y="531.5" width="4" height="11" fill="#000"/><rect x="339.5" y="530.5" width="4" height="4" fill="#fff"/><rect x="347.5" y="533.5" width="4" height="5" fill="#fff"/><rect x="355.5" y="537.5" width="4" height="3" fill="#fff"/><rect x="363.5" y="527.5" width="4" height="12" fill="#000"/><rect x="371.5" y="495.5" width="4" height="34" fill="#000"/><rect x="379.5" y="477.5" width="4" height="18" fill="#000"/><rect x="387.5" y="477.5" width="4" height="25" fill="#fff"/><rect x="395.5" y="475.5" width="4" height="27" fill="#000"/><rect x="403.5" y="475.5" width="4" height="12" fill="#fff"/><rect x="411.5" y="487.5" width="4" height="41" fill="#fff"/><rect x="419.5" y="515.5" width="4" height="13" fill="#000"/><rect x="427.5" y="513.5" width="4" height="33" fill="#fff"/><rect x="435.5" y="545.5" width="4" height="3" fill="#fff"/><rect x="443.5" y="544.5" width="4" height="6" fill="#000"/><rect x="451.5" y="489.5" width="4" height="56" fill="#000"/><rect x="459.5" y="434.5" width="4" height="56" fill="#000"/><rect x="467.5" y="421.5" width="4" height="14" fill="#000"/><rect x="475.5" y="420.5" width="4" height="10" fill="#fff"/><rect x="483.5" y="394.5" width="4" height="39" fill="#000"/><rect x="491.5" y="358.5" width="4" height="38" fill="#000"/><rect x="499.5" y="358.5" width="4" height="20" fill="#fff"/><rect x="507.5" y="377.5" width="4" height="18" fill="#fff"/><rect x="515.5" y="371.5" width="4" height="24" fill="#000"/><rect x="523.5" y="350.5" width="4" height="22" fill="#000"/><rect x="531.5" y="346.5" width="4" height="4" fill="#000"/><rect x="539.5" y="327.5" width="4" height="20" fill="#000"/><rect x="547.5" y="327.5" width="4" height="54" fill="#fff"/><rect x="555.5" y="359.5" width="4" height="21" fill="#000"/><rect x="563.5" y="359.5" width="4" height="1" fill="#000"/><rect x="571.5" y="359.5" width="4" height="13" fill="#fff"/><rect x="579.5" y="344.5" width="4" height="27" fill="#000"/><rect x="587.5" y="312.5" width="4" height="30" fill="#000"/><rect x="595.5" y="278.5" width="4" height="35" fill="#000"/><rect x="603.5" y="190.5" width="4" height="89" fill="#000"/><rect x="611.5" y="190.5" width="4" height="38" fill="#fff"/><rect x="619.5" y="184.5" width="4" height="45" fill="#000"/><rect x="627.5" y="184.5" width="4" height="7" fill="#fff"/><rect x="635.5" y="191.5" width="4" height="1" fill="#fff"/><rect x="643.5" y="177.5" width="4" height="16" fill="#000"/><rect x="651.5" y="176.5" width="4" height="1" fill="#fff"/><rect x="659.5" y="176.5" width="4" height="5" fill="#fff"/><rect x="667.5" y="185.5" width="4" height="2" fill="#fff"/><rect x="675.5" y="185.5" width="4" height="19" fill="#fff"/><rect x="683.5" y="202.5" width="4" height="15" fill="#fff"/><rect x="691.5" y="215.5" width="4" height="2" fill="#000"/><rect x="699.5" y="214.5" width="4" height="2" fill="#fff"/><rect x="707.5" y="214.5" width="4" height="6" fill="#fff"/><rect x="715.5" y="220.5" width="4" height="3" fill="#fff"/><rect x="723.5" y="209.5" width="4" height="14" fill="#000"/><rect x="731.5" y="190.5" width="4" height="19" fill="#000"/><rect x="739.5" y="186.5" width="4" height="3" fill="#000"/><rect x="747.5" y="186.5" width="4" height="2" fill="#fff"/><rect x="755.5" y="188.5" width="4" height="13" fill="#fff"/><rect x="763.5" y="200.5" width="4" height="13" fill="#fff"/><rect x="771.5" y="206.5" width="4" height="7" fill="#000"/><rect x="779.5" y="206.5" width="4" height="101" fill="#fff"/><rect x="787.5" y="305.5" width="4" height="2" fill="#fff"/><rect x="795.5" y="305.5" width="4" height="1" fill="#fff"/><rect x="803.5" y="233.5" width="4" height="73" fill="#000"/><rect x="811.5" y="233.5" width="4" height="4" fill="#fff"/><rect x="819.5" y="234.5" width="4" height="2" fill="#fff"/><rect x="827.5" y="212.5" width="4" height="23" fill="#000"/><rect x="835.5" y="212.5" width="4" height="7" fill="#fff"/><rect x="843.5" y="218.5" width="4" height="4" fill="#000"/><rect x="851.5" y="208.5" width="4" height="21" fill="#000"/><rect x="859.5" y="201.5" width="4" height="8" fill="#000"/><rect x="867.5" y="155.5" width="4" height="47" fill="#000"/><rect x="875.5" y="150.5" width="4" height="4" fill="#000"/><rect x="883.5" y="139.5" width="4" height="11" fill="#000"/><rect x="891.5" y="138.5" width="4" height="0" fill="#000"/><rect x="899.5" y="142.5" width="4" height="6" fill="#fff"/><rect x="907.5" y="148.5" width="4" height="32" fill="#fff"/><rect x="915.5" y="178.5" width="4" height="24" fill="#fff"/><rect x="923.5" y="202.5" width="4" height="16" fill="#fff"/><rect x="931.5" y="217.5" width="4" height="8" fill="#fff"/><rect x="939.5" y="225.5" width="4" height="13" fill="#fff"/><rect x="947.5" y="236.5" width="4" height="10" fill="#fff"/><rect x="955.5" y="216.5" width="4" height="30" fill="#000"/><rect x="963.5" y="216.5" width="4" height="39" fill="#fff"/><rect x="971.5" y="255.5" width="4" height="64" fill="#fff"/><rect x="979.5" y="319.5" width="4" height="43" fill="#fff"/><rect x="987.5" y="361.5" width="4" height="34" fill="#fff"/><rect x="995.5" y="395.5" width="4" height="26" fill="#fff"/><rect x="1003.5" y="420.5" width="4" height="24" fill="#fff"/><rect x="1011.5" y="433.5" width="4" height="11" fill="#000"/><rect x="1019.5" y="433.5" width="4" height="11" fill="#fff"/><rect x="1027.5" y="429.5" width="4" height="13" fill="#000"/><rect x="1035.5" y="424.5" width="4" height="7" fill="#000"/><rect x="1043.5" y="417.5" width="4" height="7" fill="#000"/><rect x="1051.5" y="386.5" width="4" height="31" fill="#000"/><rect x="1059.5" y="386.5" width="4" height="21" fill="#fff"/><rect x="1067.5" y="405.5" width="4" height="2" fill="#fff"/><rect x="1075.5" y="401.5" width="4" height="5" fill="#000"/><rect x="1083.5" y="401.5" width="4" height="12" fill="#fff"/><rect x="1091.5" y="413.5" width="4" height="14" fill="#fff"/><rect x="1099.5" y="408.5" width="4" height="19" fill="#000"/><rect x="1107.5" y="398.5" width="4" height="9" fill="#000"/><rect x="1115.5" y="398.5" width="4" height="6" fill="#fff"/></g></g><g stroke="#fff" shape-rendering="crispEdges"><line x1="900" y1="133.5" x2="1109" y2="133.5"/><line x1="1029" y1="442.5" x2="1109" y2="442.5"/><line x1="1101" y1="435.5" x2="1109" y2="435.5"/><line x1="445" y1="555.5" x2="1109" y2="555.5"/><line x1="309" y1="581.5" x2="1109" y2="581.5"/><line x1="148" y1="603.5" x2="1109" y2="603.5"/></g><g stroke="#0000ff" fill="none" stroke-width="1.4"><path d="M145.5 610L149 606.5L152.5 610V617H145.5Z"/><path d="M305.5 588L309 584.5L312.5 588V595H305.5Z"/><path d="M441.5 562L445 558.5L448.5 562V569H441.5Z"/><path d="M1025.5 453L1029 449.5L1032.5 453V460H1025.5Z"/><path d="M1097.5 439L1101 435.5L1104.5 439V446H1097.5Z"/></g><path d="M897.5 133.5h5v5.5l-2.5 4.5l-2.5-4.5z" stroke="#ff0000" stroke-width="1.3" fill="none"/><path d="M944 102H953L948.5 107Z" fill="#333"/><rect x="4.5" y="101.5" width="1314" height="553" fill="none" stroke="#fff" shape-rendering="crispEdges"/><path d="M1318 123.5H1321M1318 156.5H1321M1318 189.5H1321M1318 222.5H1321M1318 255.5H1321M1318 288.5H1321M1318 321.5H1321M1318 354.5H1321M1318 387.5H1321M1318 420.5H1321M1318 453.5H1321M1318 486.5H1321M1318 519.5H1321M1318 552.5H1321M1318 585.5H1321M1318 618.5H1321M1318 651.5H1321M5.5 654V658M69.5 654V658M133.5 654V658M197.5 654V658M261.5 654V658M325.5 654V658M389.5 654V658M453.5 654V658M517.5 654V658M581.5 654V658M645.5 654V658M709.5 654V658M773.5 654V658M837.5 654V658M901.5 654V658M965.5 654V658M1029.5 654V658M1093.5 654V658" stroke="#fff" shape-rendering="crispEdges"/><g fill="#fff" font-family='"Liberation Sans", sans-serif' font-size="10.2px"><text x="1325" y="127" font-size="10.2px" textLength="32" lengthAdjust="spacingAndGlyphs">1810.70</text><text x="1325" y="160" font-size="10.2px" textLength="32" lengthAdjust="spacingAndGlyphs">1806.10</text><text x="1325" y="193" font-size="10.2px" textLength="32" lengthAdjust="spacingAndGlyphs">1801.60</text><text x="1325" y="226" font-size="10.2px" textLength="32" lengthAdjust="spacingAndGlyphs">1797.00</text><text x="1325" y="259" font-size="10.2px" textLength="32" lengthAdjust="spacingAndGlyphs">1792.50</text><text x="1325" y="292" font-size="10.2px" textLength="32" lengthAdjust="spacingAndGlyphs">1787.90</text><text x="1325" y="325" font-size="10.2px" textLength="32" lengthAdjust="spacingAndGlyphs">1783.40</text><text x="1325" y="358" font-size="10.2px" textLength="32" lengthAdjust="spacingAndGlyphs">1778.80</text><text x="1325" y="391" font-size="10.2px" textLength="32" lengthAdjust="spacingAndGlyphs">1774.30</text><text x="1325" y="424" font-size="10.2px" textLength="32" lengthAdjust="spacingAndGlyphs">1769.70</text><text x="1325" y="457" font-size="10.2px" textLength="32" lengthAdjust="spacingAndGlyphs">1765.20</text><text x="1325" y="490" font-size="10.2px" textLength="32" lengthAdjust="spacingAndGlyphs">1760.70</text><text x="1325" y="523" font-size="10.2px" textLength="32" lengthAdjust="spacingAndGlyphs">1756.10</text><text x="1325" y="556" font-size="10.2px" textLength="32" lengthAdjust="spacingAndGlyphs">1751.60</text><text x="1325" y="589" font-size="10.2px" textLength="32" lengthAdjust="spacingAndGlyphs">1747.00</text><text x="1325" y="622" font-size="10.2px" textLength="32" lengthAdjust="spacingAndGlyphs">1742.50</text><text x="1325" y="655" font-size="10.2px" textLength="32" lengthAdjust="spacingAndGlyphs">1737.90</text><text x="4.5" y="667" textLength="53.53" lengthAdjust="spacingAndGlyphs">28 Nov 2022</text><text x="68.5" y="667" textLength="56.16" lengthAdjust="spacingAndGlyphs">28 Nov 18:00</text><text x="132.5" y="667" textLength="56.16" lengthAdjust="spacingAndGlyphs">29 Nov 03:00</text><text x="196.5" y="667" textLength="55.45" lengthAdjust="spacingAndGlyphs">29 Nov 11:00</text><text x="260.5" y="667" textLength="56.16" lengthAdjust="spacingAndGlyphs">29 Nov 19:00</text><text x="324.5" y="667" textLength="56.16" lengthAdjust="spacingAndGlyphs">30 Nov 04:00</text><text x="388.5" y="667" textLength="56.16" lengthAdjust="spacingAndGlyphs">30 Nov 12:00</text><text x="452.5" y="667" textLength="56.16" lengthAdjust="spacingAndGlyphs">30 Nov 20:00</text><text x="516.5" y="667" textLength="50.91" lengthAdjust="spacingAndGlyphs">1 Dec 05:00</text><text x="580.5" y="667" textLength="50.91" lengthAdjust="spacingAndGlyphs">1 Dec 13:00</text><text x="644.5" y="667" textLength="50.91" lengthAdjust="spacingAndGlyphs">1 Dec 21:00</text><text x="708.5" y="667" textLength="50.91" lengthAdjust="spacingAndGlyphs">2 Dec 06:00</text><text x="772.5" y="667" textLength="50.91" lengthAdjust="spacingAndGlyphs">2 Dec 14:00</text><text x="836.5" y="667" textLength="50.91" lengthAdjust="spacingAndGlyphs">2 Dec 22:00</text><text x="900.5" y="667" textLength="50.91" lengthAdjust="spacingAndGlyphs">5 Dec 07:00</text><text x="964.5" y="667" textLength="50.91" lengthAdjust="spacingAndGlyphs">5 Dec 15:00</text><text x="1028.5" y="667" textLength="50.91" lengthAdjust="spacingAndGlyphs">5 Dec 23:00</text><text x="1092.5" y="667" textLength="50.91" lengthAdjust="spacingAndGlyphs">6 Dec 08:00</text></g><rect x="1320" y="399" width="41" height="11" fill="#fff"/><text x="1324.5" y="407.8" fill="#000" font-family='"Liberation Sans", sans-serif' font-size="9.6px" textLength="32.3" lengthAdjust="spacingAndGlyphs">1772.03</text><path d="M8 108H15L11.5 112Z" fill="#fff"/><g fill="#fff" font-family='"Liberation Sans", sans-serif' font-size="9.4px" style="white-space:pre"><text x="20" y="113">GOLD,H1&#160; 1772.85 1773.45 1770.12 1772.03</text><text x="11" y="315">#154435504 tp</text><text x="11" y="381">#154435504 buy 0.03</text><text x="11" y="454">#154435504 sl</text></g><g fill="#fff" font-family='"Liberation Sans", sans-serif' font-size="12.9px"><text x="779.3" y="143" textLength="244.7" lengthAdjust="spacingAndGlyphs">Penetrating line (Trend reversal, Sell entry)</text><text x="906" y="456" textLength="246.4" lengthAdjust="spacingAndGlyphs">Penetrating line (Trend reversal, Buy entry)</text><text x="972.6" y="450" textLength="257.4" lengthAdjust="spacingAndGlyphs">Absorption (Sharp change in rate, Buy entry)</text><text x="316" y="570" textLength="257.4" lengthAdjust="spacingAndGlyphs">Absorption (Sharp change in rate, Buy entry)</text><text x="186" y="595" textLength="246.4" lengthAdjust="spacingAndGlyphs">Penetrating line (Trend reversal, Buy entry)</text><text x="20" y="617" textLength="257.4" lengthAdjust="spacingAndGlyphs">Absorption (Sharp change in rate, Buy entry)</text></g></svg>
<div class="a" style="left:0;top:675px;width:1366px;height:2px;background:#fff"></div><div class="a" style="left:0;top:677px;width:1366px;height:1px;background:#000"></div><div class="a" style="left:0;top:665px;width:2px;height:31px;background:#8a8a8a"></div><div class="a" style="left:1364px;top:678px;width:2px;height:19px;background:#dcdcdc"></div><div class="a" style="left:0;top:696px;width:1366px;height:1px;background:#fff"></div><div class="a" style="left:274px;top:675px;width:72px;height:21px;background:#fff;border:1px solid #000;border-top:none;box-sizing:border-box;"></div><div class="a t" style="left:17.6px;top:682.07px;font-size:10.9px;color:#757575;">EURUSD,M15</div><div class="a t" style="left:110px;top:682.07px;font-size:10.9px;color:#757575;">USDCAD,H1</div><div class="a t" style="left:197px;top:682.07px;font-size:10.9px;color:#757575;">GBPJPY,M15</div><div class="a t" style="left:285.5px;top:682.07px;font-size:10.9px;color:#000;">GOLD,H1</div><div class="a t" style="left:357px;top:682.07px;font-size:10.9px;color:#757575;">GOLD,M15</div><div class="a t" style="left:438.5px;top:682.07px;font-size:10.9px;color:#757575;">US100Cash,M30</div><div class="a t" style="left:545.5px;top:682.07px;font-size:10.9px;color:#757575;">US30Cash,H1</div><div class="a t" style="left:637px;top:682.07px;font-size:10.9px;color:#757575;">EURJPY,M15</div><div class="a t" style="left:726.8px;top:682.07px;font-size:10.9px;color:#757575;">NZDJPY,M15</div><div class="a t" style="left:817px;top:682.07px;font-size:10.9px;color:#757575;">USDJPY,M15</div><div class="a t" style="left:904.8px;top:682.07px;font-size:10.9px;color:#757575;">GBPUSD,M30</div><div class="a t" style="left:996.4px;top:682.07px;font-size:10.9px;color:#757575;">USDCHF,M30</div><div class="a t" style="left:1090px;top:682.07px;font-size:10.9px;color:#757575;">AUDUSD,M30</div><div class="a t" style="left:1186px;top:682.07px;font-size:10.9px;color:#757575;">AUDJPY,M30</div><div class="a" style="left:1277px;top:678px;width:52px;height:18px;overflow:hidden;"><div class="a t" style="left:0;top:4.1px;font-size:10.9px;color:#757575">CADJPY,M30</div></div><div class="a" style="left:98px;top:681px;width:1px;height:13px;background:#555"></div><div class="a" style="left:186px;top:681px;width:1px;height:13px;background:#555"></div><div class="a" style="left:426px;top:681px;width:1px;height:13px;background:#555"></div><div class="a" style="left:534px;top:681px;width:1px;height:13px;background:#555"></div><div class="a" style="left:626px;top:681px;width:1px;height:13px;background:#555"></div><div class="a" style="left:714px;top:681px;width:1px;height:13px;background:#555"></div><div class="a" style="left:804px;top:681px;width:1px;height:13px;background:#555"></div><div class="a" style="left:894px;top:681px;width:1px;height:13px;background:#555"></div><div class="a" style="left:986px;top:681px;width:1px;height:13px;background:#555"></div><div class="a" style="left:1079px;top:681px;width:1px;height:13px;background:#555"></div><div class="a" style="left:1174px;top:681px;width:1px;height:13px;background:#555"></div><div class="a" style="left:1266px;top:681px;width:1px;height:13px;background:#555"></div><svg class="a" style="left:1333px;top:683px;" width="5" height="7" viewBox="0 0 5 7"><path d="M5 0V7L0 3.5Z" fill="#a0a0a0"/></svg><svg class="a" style="left:1352px;top:683px;" width="5" height="7" viewBox="0 0 5 7"><path d="M0 0V7L5 3.5Z" fill="#000"/></svg>
<div class="a t" style="left:2.6px;top:704.6px;font-size:11.1px;color:#000;">For Help, press F1</div><div class="a" style="left:672px;top:701px;width:1px;height:17px;background:#a0a0a0;box-shadow:1px 0 0 #fff"></div><div class="a" style="left:788px;top:701px;width:1px;height:17px;background:#a0a0a0;box-shadow:1px 0 0 #fff"></div><div class="a" style="left:890px;top:701px;width:1px;height:17px;background:#a0a0a0;box-shadow:1px 0 0 #fff"></div><div class="a" style="left:961px;top:701px;width:1px;height:17px;background:#a0a0a0;box-shadow:1px 0 0 #fff"></div><div class="a" style="left:1032px;top:701px;width:1px;height:17px;background:#a0a0a0;box-shadow:1px 0 0 #fff"></div><div class="a" style="left:1100px;top:701px;width:1px;height:17px;background:#a0a0a0;box-shadow:1px 0 0 #fff"></div><div class="a" style="left:1170px;top:701px;width:1px;height:17px;background:#a0a0a0;box-shadow:1px 0 0 #fff"></div><div class="a" style="left:1236px;top:701px;width:1px;height:17px;background:#a0a0a0;box-shadow:1px 0 0 #fff"></div><div class="a t" style="left:678px;top:704.27px;font-size:11.5px;color:#000;">Default</div><svg class="a" style="left:1242px;top:703px;" width="24" height="13" viewBox="0 0 24 13"><rect x="1" y="1" width="2" height="5" fill="#5a7a10"/><rect x="1" y="12" width="2" height="1" fill="#103a5a"/><rect x="4" y="1" width="2" height="5" fill="#5a7a10"/><rect x="4" y="11" width="2" height="2" fill="#103a5a"/><rect x="7" y="1" width="2" height="5" fill="#5a7a10"/><rect x="7" y="10" width="2" height="3" fill="#103a5a"/><rect x="10" y="1" width="2" height="5" fill="#5a7a10"/><rect x="10" y="9" width="2" height="4" fill="#103a5a"/><rect x="13" y="1" width="2" height="5" fill="#5a7a10"/><rect x="13" y="8" width="2" height="5" fill="#103a5a"/><rect x="16" y="1" width="2" height="5" fill="#5a7a10"/><rect x="16" y="7" width="2" height="6" fill="#103a5a"/><rect x="19" y="1" width="2" height="5" fill="#5a7a10"/><rect x="19" y="6" width="2" height="7" fill="#103a5a"/><rect x="22" y="1" width="2" height="5" fill="#5a7a10"/><rect x="22" y="5" width="2" height="8" fill="#103a5a"/></svg><div class="a t" style="left:1269px;top:704.43px;font-size:11.3px;color:#000;">3489/7 kb</div>
<div id="taskbar" class="a"></div><div class="a" style="left:0;top:720px;width:1366px;height:1px;background:#654f48"></div>
<svg class="a" style="left:21px;top:733px;" width="20" height="20" viewBox="0 0 20 20"><defs><linearGradient id="sun" x1="0" y1="0" x2="1" y2="1"><stop offset="0" stop-color="#f8c02a"/><stop offset="1" stop-color="#f06a10"/></linearGradient></defs><circle cx="10" cy="10" r="10" fill="url(#sun)"/></svg><div class="a t" style="left:50.5px;top:730.67px;font-size:11.5px;color:#fff;">24°C</div><div class="a t" style="left:50.5px;top:747.01px;font-size:11.8px;color:#e0d8d4;">Sunny</div><svg class="a" style="left:205px;top:732px;" width="24" height="24" viewBox="0 0 24 24"><rect x="0" y="0" width="11.4" height="11.4" fill="#5cc8f8"/><rect x="12.6" y="0" width="11.4" height="11.4" fill="#3ab4f4"/><rect x="0" y="12.6" width="11.4" height="11.4" fill="#2aa4ee"/><rect x="12.6" y="12.6" width="11.4" height="11.4" fill="#1890e8"/></svg><div class="a" style="left:242px;top:728px;width:98px;height:32px;border-radius:16px;background:#62443b;box-shadow:inset 0 1px 0 #6c5047"></div><svg class="a" style="left:264px;top:737px;" width="16" height="16" viewBox="0 0 16 16"><circle cx="6.5" cy="6.5" r="5" fill="none" stroke="#fff" stroke-width="1.6"/><path d="M10 10l5 5" stroke="#fff" stroke-width="1.8"/></svg><div class="a t" style="left:283.7px;top:739.35px;font-size:11.4px;color:#fff;">Search</div><svg class="a" style="left:355px;top:732px;" width="24" height="24" viewBox="0 0 24 24"><rect x="9" y="2" width="13" height="13" rx="1.5" fill="#e8e8e8"/><rect x="2" y="9" width="13" height="13" rx="1.5" fill="#6a6a6a" opacity=".95"/></svg><svg class="a" style="left:398px;top:731px;" width="25" height="25" viewBox="0 0 25 25"><circle cx="12.5" cy="12.5" r="11" fill="#7b6cd8"/><path d="M3 18l-1 6 6-3z" fill="#7b6cd8"/><rect x="6.5" y="8" width="9" height="9" rx="1.5" fill="#fff"/><path d="M16 11l4-2.5v8l-4-2.5z" fill="#fff"/></svg><svg class="a" style="left:442px;top:732px;" width="25" height="22" viewBox="0 0 25 22"><path d="M1 2h8l2 2h13v17H1z" fill="#f4c430"/><rect x="1" y="6" width="23" height="15" fill="#fcd855"/><rect x="6" y="14" width="13" height="6" rx="1" fill="#2a8ae0"/></svg><svg class="a" style="left:487px;top:732px;" width="25" height="22" viewBox="0 0 25 22"><path d="M1 8L12.5 1L24 8V21H1Z" fill="#1a7ad8"/><path d="M1 8h23L12.5 16z" fill="#fff"/><path d="M1 21L12.5 12L24 21" fill="#46b4f4"/></svg><svg class="a" style="left:531px;top:731px;" width="24" height="25" viewBox="0 0 24 25"><path d="M7 6a5 5 0 0 1 10 0" fill="none" stroke="#3ab0f0" stroke-width="1.8"/><rect x="1" y="6" width="22" height="18" rx="3" fill="#f6f6f6"/><rect x="7.5" y="10" width="4" height="4" fill="#f25022"/><rect x="12.5" y="10" width="4" height="4" fill="#7fba00"/><rect x="7.5" y="15" width="4" height="4" fill="#00a4ef"/><rect x="12.5" y="15" width="4" height="4" fill="#ffb900"/></svg><svg class="a" style="left:575px;top:732px;" width="24" height="22" viewBox="0 0 24 22"><rect x="6" y="1" width="17" height="20" rx="1" fill="#2b6fd0"/><rect x="6" y="1" width="17" height="6" fill="#41a5ee"/><rect x="6" y="7" width="17" height="7" fill="#2b7cd3"/><rect x="0" y="5" width="12" height="12" rx="1" fill="#185abd"/><text x="1.2" y="15" font-family="Liberation Sans" font-size="10" font-weight="bold" fill="#fff">W</text></svg><svg class="a" style="left:618px;top:731px;" width="26" height="26" viewBox="0 0 26 26"><circle cx="13" cy="12.5" r="11" fill="#fff"/><path d="M3 24l2-6 4 3z" fill="#fff"/><circle cx="13" cy="12.5" r="9" fill="#25d366"/><path d="M9 8c0 5 4 9 9 9l1-2-3-1-1 1c-2-1-3-2-4-4l1-1-1-3z" fill="#fff"/></svg><svg class="a" style="left:663px;top:732px;" width="24" height="24" viewBox="0 0 24 24"><rect x="0" y="0" width="24" height="24" fill="#fff"/><text x="6" y="16" font-family="Liberation Sans" font-size="15" font-weight="bold" fill="#222">a</text><path d="M5 18c5 3 10 3 14 0" stroke="#f90" stroke-width="1.5" fill="none"/></svg><svg class="a" style="left:706px;top:732px;" width="25" height="22" viewBox="0 0 25 22"><rect x="6" y="1" width="18" height="20" rx="1" fill="#107c41"/><rect x="15" y="1" width="9" height="10" fill="#33c481"/><rect x="0" y="5" width="12" height="12" rx="1" fill="#185c37"/><text x="2.5" y="15" font-family="Liberation Sans" font-size="10" font-weight="bold" fill="#fff">X</text></svg><svg class="a" style="left:751px;top:732px;" width="25" height="22" viewBox="0 0 25 22"><circle cx="14" cy="11" r="10.5" fill="#ed6c47"/><path d="M14 .5a10.5 10.5 0 0 1 10.5 10.5H14z" fill="#ff8f6b"/><rect x="0" y="5" width="12" height="12" rx="1" fill="#c43e1c"/><text x="3" y="15" font-family="Liberation Sans" font-size="10" font-weight="bold" fill="#fff">P</text></svg><svg class="a" style="left:795px;top:732px;" width="24" height="24" viewBox="0 0 24 24"><rect x="0" y="0" width="24" height="24" fill="#1a72d8"/><circle cx="12" cy="12" r="9.5" fill="#fff"/><path d="M4 11l8-4 8 4-8 4z" fill="#1a3a7a"/><path d="M7 13v3c3 2 7 2 10 0v-3l-5 2.5z" fill="#1a3a7a"/><path d="M18 12v5" stroke="#f8a020"/></svg><svg class="a" style="left:839px;top:734px;" width="24" height="20" viewBox="0 0 24 20"><rect x="0" y="0" width="24" height="20" fill="#a8c8e8"/><rect x="1" y="1" width="22" height="18" fill="#e8f2fc"/><path d="M1 17l3-6 3 3 3-10 3 8 3-4 3 6 4-2v7H1z" fill="#5aa0e0"/></svg><svg class="a" style="left:883px;top:732px;" width="24" height="24" viewBox="0 0 24 24"><circle cx="12" cy="12" r="12" fill="#1ed760"/><path d="M5.5 8.5c4-1.5 9-1 13 1M6.5 12.5c3.5-1 7.5-.6 10.5 1M7.5 16c3-.8 6-.4 8.5.8" stroke="#111" stroke-width="2" fill="none" stroke-linecap="round"/></svg><svg class="a" style="left:926px;top:732px;" width="25" height="25" viewBox="0 0 25 25"><circle cx="12" cy="12.5" r="11" fill="#db4437"/><path d="M12 12.5L21.5 7a11 11 0 0 1 -4 15z" fill="#f4c20d"/><path d="M12 12.5L17.5 22a11 11 0 0 1 -15-12.5z" fill="#0f9d58"/><circle cx="12" cy="12.5" r="5" fill="#fff"/><circle cx="12" cy="12.5" r="4" fill="#4285f4"/></svg><svg class="a" style="left:939px;top:726px;" width="18" height="18" viewBox="0 0 18 18"><circle cx="9" cy="9" r="8" fill="#8a5cd8" stroke="#58382f" stroke-width="1"/><text x="5.5" y="12.5" font-family="Liberation Sans" font-size="10" fill="#fff">E</text></svg><div class="a" style="left:963px;top:725px;width:40px;height:38px;border-radius:4px;background:#62463d;box-shadow:inset 0 0 0 1px #6b5047"></div><div class="a" style="left:971px;top:732px;width:24px;height:24px;border-radius:3px;background:#111"></div><div class="a t" style="left:974.5px;top:739.69px;font-size:11px;color:#fff;font-weight:bold;font-style:italic;letter-spacing:-0.5px">XM</div><svg class="a" style="left:972px;top:739px;" width="5" height="9" viewBox="0 0 5 9"><path d="M1.5 0L4.5 4.5L1 9Z" fill="#f00"/></svg><div class="a" style="left:975px;top:760px;width:16px;height:3px;border-radius:2px;background:#d8c8c0"></div><svg class="a" style="left:1014px;top:732px;" width="25" height="24" viewBox="0 0 25 24"><circle cx="12" cy="12" r="11.5" fill="#ff4500"/><ellipse cx="12" cy="14" rx="7" ry="5" fill="#fff"/><circle cx="9.5" cy="13.5" r="1.3" fill="#ff4500"/><circle cx="14.5" cy="13.5" r="1.3" fill="#ff4500"/><circle cx="15" cy="6" r="1.5" fill="#fff"/></svg><svg class="a" style="left:1025px;top:727px;" width="22" height="18" viewBox="0 0 22 18"><circle cx="11" cy="9" r="8.5" fill="#222" /><text x="4.5" y="12.8" font-family="Liberation Sans" font-size="10" fill="#fff">10</text></svg><svg class="a" style="left:1058px;top:732px;" width="24" height="24" viewBox="0 0 24 24"><path d="M2 8l10-6 10 6-10 6z" fill="#7ed321"/><path d="M2 11l10 6 10-6v3l-10 6-10-6z" fill="#f5a623"/><path d="M2 8l10 6 10-6v3l-10 6-10-6z" fill="#4a90e2"/><path d="M2 14l10 6 10-6v3l-10 6-10-6z" fill="#d0021b"/></svg><div class="a" style="left:936px;top:760px;width:6px;height:3px;border-radius:2px;background:#a89890"></div><div class="a" style="left:1024px;top:760px;width:6px;height:3px;border-radius:2px;background:#a89890"></div><div class="a" style="left:1068px;top:760px;width:6px;height:3px;border-radius:2px;background:#a89890"></div><svg class="a" style="left:1111px;top:738px;" width="15" height="10" viewBox="0 0 15 10"><path d="M1 8l6.5-6 6.5 6" stroke="#fff" stroke-width="1.3" fill="none"/></svg><div class="a t" style="left:1140.5px;top:732.06px;font-size:10.8px;color:#fff;">ENG</div><div class="a t" style="left:1144.5px;top:747.66px;font-size:10.8px;color:#fff;">US</div><svg class="a" style="left:1181px;top:736px;" width="18" height="14" viewBox="0 0 18 14"><path d="M1.5 5a11 11 0 0 1 15 0M4 8a7.5 7.5 0 0 1 10 0M6.5 11a4 4 0 0 1 5 0" stroke="#fff" stroke-width="1.3" fill="none"/><circle cx="9" cy="12.5" r="1.2" fill="#fff"/></svg><svg class="a" style="left:1205px;top:736px;" width="17" height="15" viewBox="0 0 17 15"><path d="M1 5h3l4-4v13l-4-4H1z" fill="none" stroke="#fff" stroke-width="1.1"/><path d="M11 5l5 5M16 5l-5 5" stroke="#fff" stroke-width="1.1"/></svg><svg class="a" style="left:1228px;top:736px;" width="19" height="14" viewBox="0 0 19 14"><rect x="1" y="3" width="15" height="9" rx="1.5" fill="none" stroke="#fff" stroke-width="1.1"/><rect x="16.5" y="6" width="1.5" height="3" fill="#fff"/><path d="M6 0l-3 6h3l-2 5" stroke="#fff" fill="none"/></svg><div class="a t" style="left:1298px;top:730.89px;font-size:11px;color:#fff;">11:28</div><div class="a t" style="left:1262.8px;top:746.33px;font-size:11.9px;color:#fff;">2022/12/06</div><svg class="a" style="left:1330px;top:736px;" width="17" height="17" viewBox="0 0 17 17"><circle cx="8.5" cy="8.5" r="8" fill="#c8b4a8"/><text x="5.2" y="12.5" font-family="Liberation Sans" font-size="10.5" fill="#222">4</text></svg>
</body></html>
